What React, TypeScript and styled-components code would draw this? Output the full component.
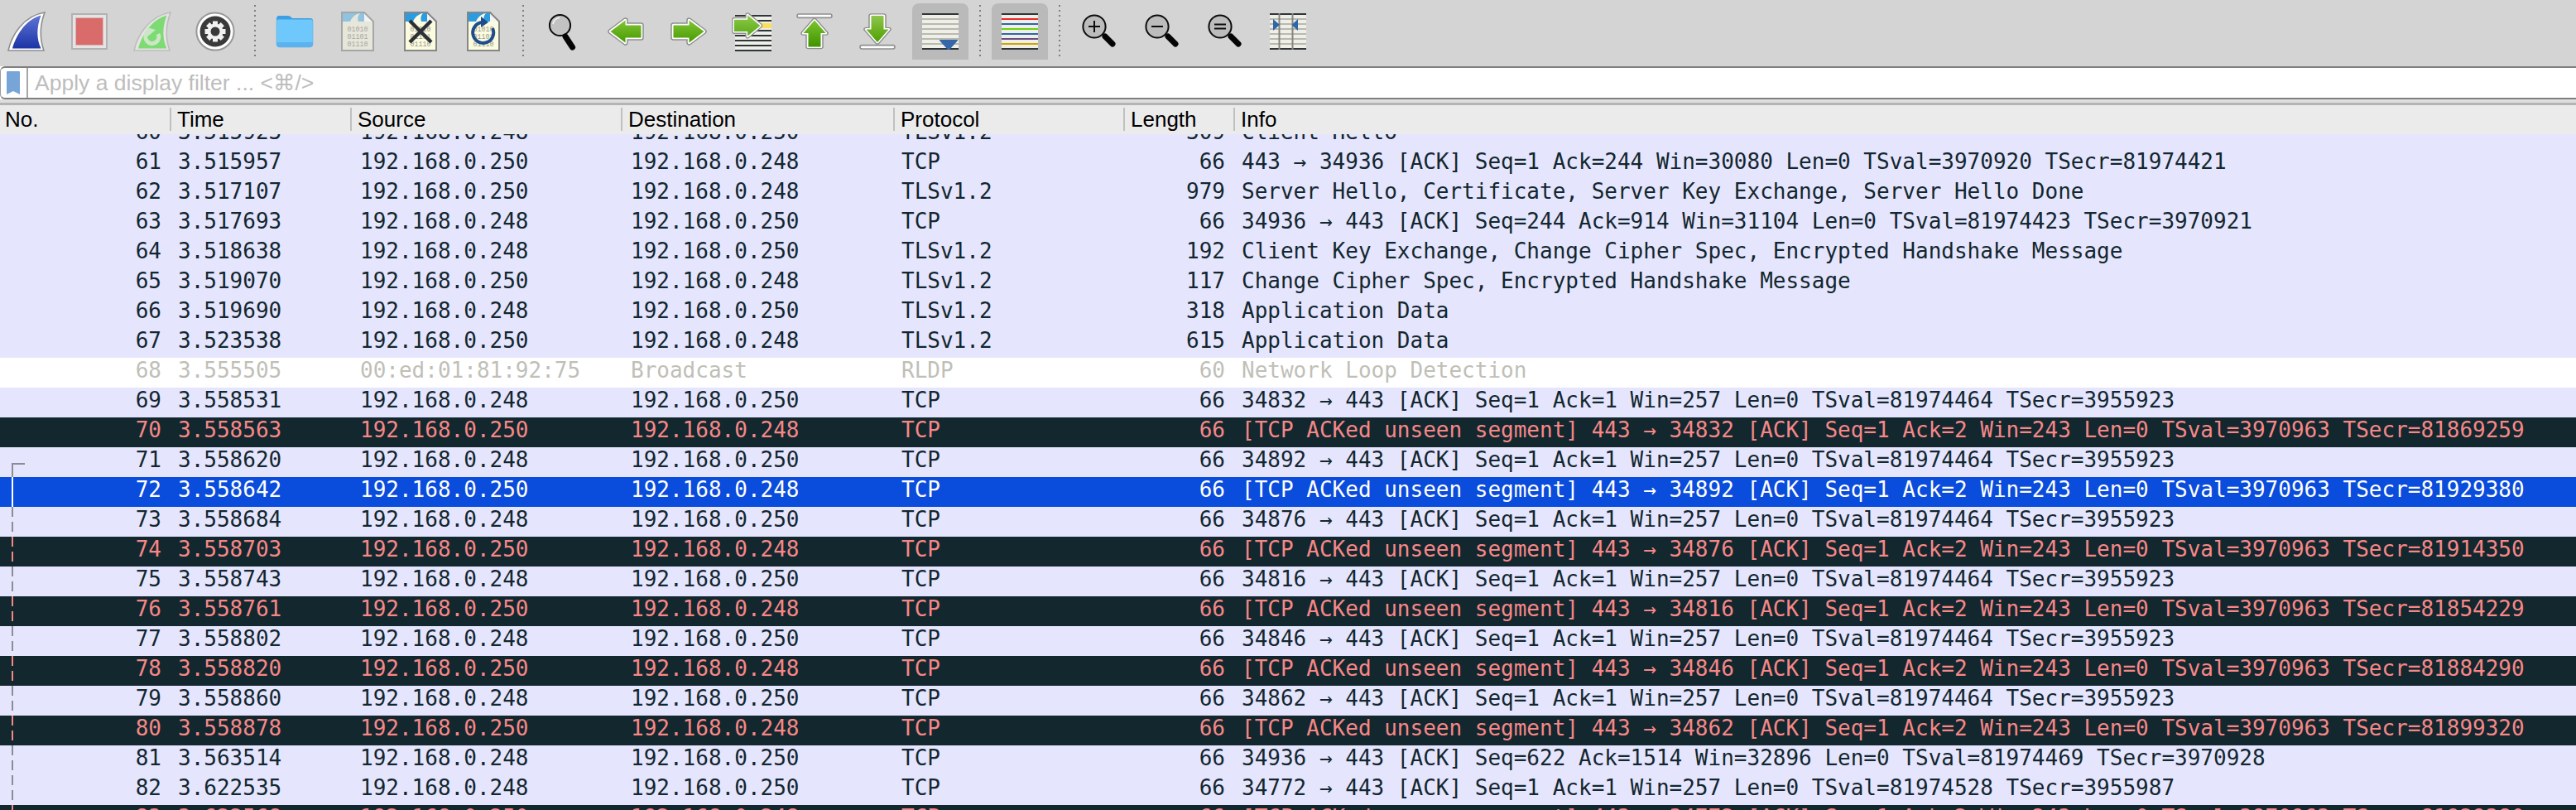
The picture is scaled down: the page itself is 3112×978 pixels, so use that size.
import type { ReactNode } from "react";
import styled, { createGlobalStyle } from "styled-components";

const GlobalStyle = createGlobalStyle`
  html, body {
    margin: 0;
    height: 100%;
    overflow: hidden;
    background: #ffffff;
  }
`;

const Page = styled.div`
  width: 3112px;
  height: 978px;
  display: flex;
  flex-direction: column;
  overflow: hidden;
`;

const Toolbar = styled.div`
  height: 80px;
  flex: none;
  display: flex;
  align-items: flex-start;
  padding: 4px 0 0 10px;
  box-sizing: border-box;
  background: #d4d4d4;
`;

const Tool = styled.div<{ $active?: boolean }>`
  flex: none;
  width: 68px;
  height: 68px;
  margin: 0 20px 0 -12px;
  display: flex;
  align-items: center;
  justify-content: center;
  border-radius: 8px 8px 0 0;
  background: ${(p) => (p.$active ? "#bababa" : "transparent")};

  svg {
    display: block;
    flex: none;
  }
`;

const ToolSeparator = styled.div`
  flex: none;
  width: 2px;
  height: 64px;
  margin: 2px 25px 0 -7px;
  background: repeating-linear-gradient(to bottom, #7d7d7d 0 2px, transparent 2px 6px);
`;

const FilterBar = styled.div`
  height: 40px;
  flex: none;
  box-sizing: border-box;
  display: flex;
  align-items: center;
  background: #ffffff;
  border-top: 2px solid #7f7f7f;
  border-bottom: 2px solid #7f7f7f;
  border-left: 1px solid #9a9a9a;
  border-bottom-left-radius: 6px;
  border-top-left-radius: 6px;
`;

const BookmarkSlot = styled.div`
  flex: none;
  width: 33px;
  height: 100%;
  display: flex;
  align-items: center;
  justify-content: center;
  padding-right: 2px;
  box-sizing: border-box;
  border-right: 2px solid #a5a5a5;
`;

const FilterHint = styled.div`
  margin-left: 8px;
  font: 26.5px "Liberation Sans", "DejaVu Sans", sans-serif;
  color: #bdbdbd;
  white-space: nowrap;
`;

const Splitter = styled.div`
  height: 7px;
  flex: none;
  box-sizing: border-box;
  background: #dedede;
  border-bottom: 3px solid #b4b4b4;
`;

const COLUMNS = "205px 218px 327px 329px 278px 133px 1fr";

const HeaderRow = styled.div`
  height: 35px;
  flex: none;
  display: grid;
  grid-template-columns: ${COLUMNS};
  background: #ebebeb;
  position: relative;
  z-index: 1;
`;

const HeaderCell = styled.div<{ $first?: boolean }>`
  height: 28px;
  margin-top: 3px;
  padding-left: ${(p) => (p.$first ? "6px" : "7px")};
  border-left: ${(p) => (p.$first ? "none" : "2px solid #c0c0c0")};
  font: 26px/28px "Liberation Sans", Arial, sans-serif;
  color: #000000;
`;

const PacketList = styled.div`
  flex: 1;
  overflow: hidden;
`;

const rowColors = {
  tcp: { bg: "#e6e5fe", fg: "#12272e", mark: "#8c8c94" },
  bad: { bg: "#12272e", fg: "#f78787", mark: "#f78787" },
  plain: { bg: "#ffffff", fg: "#bfbfb8", mark: "#8c8c94" },
  sel: { bg: "#0a4cdb", fg: "#ffffff", mark: "#ffffff" },
};

type RowKind = keyof typeof rowColors;

const Row = styled.div<{ $kind: RowKind }>`
  position: relative;
  height: 36px;
  display: grid;
  grid-template-columns: ${COLUMNS};
  background: ${(p) => rowColors[p.$kind].bg};
  color: ${(p) => rowColors[p.$kind].fg};
  font: 26px/31px "DejaVu Sans Mono", "Liberation Mono", monospace;
  white-space: pre;

  &:first-child {
    margin-top: -18px;
  }
`;

const Cell = styled.div<{ $right?: boolean; $shift?: boolean }>`
  padding: 0 10px 0 ${(p) => (p.$shift ? "12px" : "10px")};
  text-align: ${(p) => (p.$right ? "right" : "left")};
`;

const RelatedStart = styled.div<{ $kind: RowKind }>`
  position: absolute;
  left: 14px;
  top: 19px;
  bottom: 0;
  width: 16px;
  box-sizing: border-box;
  border-left: 2px solid ${(p) => rowColors[p.$kind].mark};
  border-top: 2px solid ${(p) => rowColors[p.$kind].mark};
`;

const RelatedLine = styled.div<{ $kind: RowKind; $dashed?: boolean }>`
  position: absolute;
  left: 14px;
  top: 0;
  bottom: 0;
  width: 2px;
  background: ${(p) =>
    p.$dashed
      ? `repeating-linear-gradient(to bottom, ${rowColors[p.$kind].mark} 0 12px, transparent 12px 18px)`
      : rowColors[p.$kind].mark};
`;

const BitsText = styled.text`
  font: 8.4px "Liberation Mono", "DejaVu Sans Mono", monospace;
  text-anchor: middle;
`;

const A = "192.168.0.248";
const B = "192.168.0.250";

type Packet = [number, string, string, string, string, number, string, RowKind?];

const ack = (port: number) =>
  `${port} → 443 [ACK] Seq=1 Ack=1 Win=257 Len=0 TSval=81974464 TSecr=3955923`;
const unseen = (port: number, secr: number) =>
  `[TCP ACKed unseen segment] 443 → ${port} [ACK] Seq=1 Ack=2 Win=243 Len=0 TSval=3970963 TSecr=${secr}`;

const packets: Packet[] = [
  [60, "3.515923", A, B, "TLSv1.2", 309, "Client Hello"],
  [61, "3.515957", B, A, "TCP", 66, "443 → 34936 [ACK] Seq=1 Ack=244 Win=30080 Len=0 TSval=3970920 TSecr=81974421"],
  [62, "3.517107", B, A, "TLSv1.2", 979, "Server Hello, Certificate, Server Key Exchange, Server Hello Done"],
  [63, "3.517693", A, B, "TCP", 66, "34936 → 443 [ACK] Seq=244 Ack=914 Win=31104 Len=0 TSval=81974423 TSecr=3970921"],
  [64, "3.518638", A, B, "TLSv1.2", 192, "Client Key Exchange, Change Cipher Spec, Encrypted Handshake Message"],
  [65, "3.519070", B, A, "TLSv1.2", 117, "Change Cipher Spec, Encrypted Handshake Message"],
  [66, "3.519690", A, B, "TLSv1.2", 318, "Application Data"],
  [67, "3.523538", B, A, "TLSv1.2", 615, "Application Data"],
  [68, "3.555505", "00:ed:01:81:92:75", "Broadcast", "RLDP", 60, "Network Loop Detection", "plain"],
  [69, "3.558531", A, B, "TCP", 66, ack(34832)],
  [70, "3.558563", B, A, "TCP", 66, unseen(34832, 81869259), "bad"],
  [71, "3.558620", A, B, "TCP", 66, ack(34892)],
  [72, "3.558642", B, A, "TCP", 66, unseen(34892, 81929380), "sel"],
  [73, "3.558684", A, B, "TCP", 66, ack(34876)],
  [74, "3.558703", B, A, "TCP", 66, unseen(34876, 81914350), "bad"],
  [75, "3.558743", A, B, "TCP", 66, ack(34816)],
  [76, "3.558761", B, A, "TCP", 66, unseen(34816, 81854229), "bad"],
  [77, "3.558802", A, B, "TCP", 66, ack(34846)],
  [78, "3.558820", B, A, "TCP", 66, unseen(34846, 81884290), "bad"],
  [79, "3.558860", A, B, "TCP", 66, ack(34862)],
  [80, "3.558878", B, A, "TCP", 66, unseen(34862, 81899320), "bad"],
  [81, "3.563514", A, B, "TCP", 66, "34936 → 443 [ACK] Seq=622 Ack=1514 Win=32896 Len=0 TSval=81974469 TSecr=3970928"],
  [82, "3.622535", A, B, "TCP", 66, "34772 → 443 [ACK] Seq=1 Ack=1 Win=257 Len=0 TSval=81974528 TSecr=3955987"],
  [83, "3.622568", B, A, "TCP", 66, unseen(34772, 81929380), "bad"],
];

function Gradient({ id, from, to, along }: { id: string; from: string; to: string; along?: boolean }) {
  return (
    <defs>
      <linearGradient id={id} x1="0" y1="0" x2={along ? "1" : "0"} y2={along ? "0" : "1"}>
        <stop offset="0" stopColor={from} />
        <stop offset="1" stopColor={to} />
      </linearGradient>
    </defs>
  );
}

const FIN_OUTER = "M2 48 C6 30 20 6 46 2 C40 18 40 34 45 48 Z";
const FIN_INNER = "M7 45.5 C11 31 22 11 41.5 5.5 C36 20 36 34 41.5 45.5 Z";

function StartIcon() {
  return (
    <svg width="48" height="50" viewBox="0 0 48 50">
      <Gradient id="startFin" from="#5f75d6" to="#1c33a6" />
      <path d={FIN_OUTER} fill="#ffffff" stroke="#8e8e8e" strokeWidth="1.6" />
      <path d={FIN_INNER} fill="url(#startFin)" />
    </svg>
  );
}

function StopIcon() {
  return (
    <svg width="44" height="44" viewBox="0 0 44 44">
      <rect x="1" y="1" width="42" height="42" fill="#e4e4e4" stroke="#b2b2b2" strokeWidth="2" />
      <rect x="5.5" y="5.5" width="33" height="33" fill="#d96b6b" stroke="#dfb4b4" />
    </svg>
  );
}

function RestartIcon() {
  return (
    <svg width="48" height="50" viewBox="0 0 48 50">
      <path d={FIN_OUTER} fill="#e4e4e4" stroke="#bdbdbd" strokeWidth="1.6" />
      <path d={FIN_INNER} fill="#7edb73" />
      <path d="M18 26 A8 8 0 1 0 31 28" fill="none" stroke="#cbe7c7" strokeWidth="5" />
      <path d="M16 19.5 L28 23 L18.5 31 Z" fill="#cbe7c7" />
    </svg>
  );
}

function OptionsIcon() {
  const teeth = [0, 45, 90, 135, 180, 225, 270, 315];
  return (
    <svg width="48" height="48" viewBox="0 0 48 48">
      <circle cx="24" cy="24" r="22.6" fill="#ffffff" stroke="#989898" strokeWidth="2" />
      <circle cx="24" cy="24" r="18.5" fill="#3a3a3a" />
      {teeth.map((deg) => (
        <rect key={deg} x="21" y="11.5" width="6" height="6" fill="#f2f2f2" transform={`rotate(${deg} 24 24)`} />
      ))}
      <circle cx="24" cy="24" r="7.5" fill="none" stroke="#f2f2f2" strokeWidth="4" />
    </svg>
  );
}

function FolderIcon() {
  return (
    <svg width="46" height="40" viewBox="0 0 46 40">
      <path d="M1 5 Q1 1 4 1 H15 Q18 1 20 4 H42 Q45 4 45 7 V20 H1 Z" fill="#3c9fe6" />
      <path d="M1 8 Q1 5.5 4 5.5 H42 Q45 5.5 45 8 V35 Q45 39 41 39 H5 Q1 39 1 35 Z" fill="#6ec8fb" stroke="#5db3e6" strokeWidth="0.6" />
      <path d="M1 33 H45 V35 Q45 39 41 39 H5 Q1 39 1 35 Z" fill="#5ab2ee" />
    </svg>
  );
}

function FileIcon({ band, body, bits, stroke }: { band: string; body: string; bits: string; stroke: string }) {
  return (
    <>
      <path d="M1 1 H28 L39 12 V47 H1 Z" fill={body} />
      <path d="M1 1 H28 V12 H1 Z" fill={band} />
      <path d="M11 12 C13 7 17 3 23 2 C20 5 20 9 21 12 Z" fill={body} />
      <path d="M28 1 V12 H39 Z" fill="#f4f4f4" />
      <path d="M1 1 H28 L39 12 V47 H1 Z" fill="none" stroke={stroke} strokeWidth="2" />
      <BitsText x="20" y="24" fill={bits}>01010</BitsText>
      <BitsText x="20" y="33" fill={bits}>01101</BitsText>
      <BitsText x="20" y="42" fill={bits}>01110</BitsText>
    </>
  );
}

function OpenFileIcon() {
  return (
    <svg width="40" height="48" viewBox="0 0 40 48">
      <FileIcon band="#8fc3e0" body="#e6e6da" bits="#a9a9a0" stroke="#a6a6a6" />
    </svg>
  );
}

function CloseFileIcon() {
  return (
    <svg width="40" height="48" viewBox="0 0 40 48">
      <FileIcon band="#2b9be2" body="#fbfbdf" bits="#9b9b90" stroke="#868686" />
      <path d="M7 11 L33 37 M33 11 L7 37" stroke="#2c3034" strokeWidth="4.4" />
    </svg>
  );
}

function ReloadFileIcon() {
  return (
    <svg width="40" height="48" viewBox="0 0 40 48">
      <FileIcon band="#2b9be2" body="#fbfbdf" bits="#9b9b90" stroke="#868686" />
      <path d="M18 13 A12.5 12.5 0 1 0 31 20" fill="none" stroke="#1f4d8c" strokeWidth="4" />
      <path d="M17 6 L26 13 L17 19 Z" fill="#1f4d8c" />
    </svg>
  );
}

function FindIcon() {
  return (
    <svg width="38" height="46" viewBox="0 0 38 46">
      <circle cx="15.5" cy="15.5" r="12.6" fill="#c2c2c2" stroke="#0c0c0c" strokeWidth="2" />
      <path d="M7 14 A9 9 0 0 1 15 6.5" fill="none" stroke="#f4f4f4" strokeWidth="1.6" />
      <path d="M22 29 L30.5 42" stroke="#050505" strokeWidth="7" strokeLinecap="round" />
    </svg>
  );
}

// green arrow pointing right, the other directions rotate or mirror it
function Arrow(props: { id: string; transform?: string; from?: string; to?: string; along?: boolean }) {
  const { id, transform, from = "#82c536", to = "#469a00", along } = props;
  const d = "M3.5 10.5 H22.5 V4.5 L40.5 18 L22.5 31.5 V25.5 H3.5 Z";
  return (
    <g transform={transform}>
      <Gradient id={id} from={from} to={to} along={along} />
      <path d={d} fill="none" stroke="#8f8f8f" strokeWidth="6.5" strokeLinejoin="round" />
      <path d={d} fill="none" stroke="#ffffff" strokeWidth="3.5" strokeLinejoin="round" />
      <path d={d} fill={`url(#${id})`} />
    </g>
  );
}

function BackIcon() {
  return (
    <svg width="44" height="36" viewBox="0 0 44 36">
      <Arrow id="backFill" transform="translate(44 0) scale(-1 1)" />
    </svg>
  );
}

function ForwardIcon() {
  return (
    <svg width="44" height="36" viewBox="0 0 44 36">
      <Arrow id="fwdFill" />
    </svg>
  );
}

function ListStripes({ lines }: { lines: [number, string][] }) {
  return (
    <>
      <rect width="44" height="44" fill="#efefe9" />
      {lines.map(([y, color]) => (
        <rect key={y} y={y} width="44" height="2" fill={color} />
      ))}
    </>
  );
}

const DARK = "#2f3538";
const PALE = "#b9b9ae";

function GotoIcon() {
  return (
    <svg width="48" height="48" viewBox="0 0 48 48">
      <g transform="translate(4 4)">
        <ListStripes
          lines={[
            [0, DARK],
            [6, DARK],
            [18, DARK],
            [24, DARK],
            [30, DARK],
            [36, DARK],
            [42, DARK],
          ]}
        />
        <rect x="30" y="10" width="14" height="6" fill="#fbe15b" />
      </g>
      <g transform="scale(0.85 0.94)">
        <Arrow id="gotoFill" from="#8ecb45" to="#5aa81a" />
      </g>
    </svg>
  );
}

function TopIcon() {
  return (
    <svg width="44" height="44" viewBox="0 0 44 44">
      <rect x="1" y="1" width="42" height="4.4" rx="2.2" fill="#ffffff" stroke="#8f8f8f" strokeWidth="1.6" />
      <g transform="translate(22 24.5) rotate(-90) scale(0.86 1) translate(-22 -18)">
        <Arrow id="topFill" from="#3f9400" to="#7cc42e" along />
      </g>
    </svg>
  );
}

function BottomIcon() {
  return (
    <svg width="44" height="44" viewBox="0 0 44 44">
      <rect x="1" y="38.6" width="42" height="4.4" rx="2.2" fill="#ffffff" stroke="#8f8f8f" strokeWidth="1.6" />
      <g transform="translate(22 19) rotate(90) scale(0.86 1) translate(-22 -18)">
        <Arrow id="bottomFill" from="#8ec64c" to="#4ea000" along />
      </g>
    </svg>
  );
}

const paleLines: [number, string][] = [
  [0, DARK],
  [6, PALE],
  [12, PALE],
  [18, PALE],
  [24, PALE],
  [30, PALE],
  [36, PALE],
  [42, DARK],
];

function AutoscrollIcon() {
  return (
    <svg width="44" height="44" viewBox="0 0 44 44">
      <ListStripes lines={paleLines} />
      <path d="M21 33 Q20 32 22 32 H42 Q44 32 43 33 L33 44 H31 Z" fill="#3566a9" />
    </svg>
  );
}

function ColorizeIcon() {
  return (
    <svg width="44" height="44" viewBox="0 0 44 44">
      <ListStripes
        lines={[
          [0, DARK],
          [6, "#e9272b"],
          [12, "#2f66a8"],
          [18, "#6ed00e"],
          [24, "#2f66a8"],
          [30, "#6c4b81"],
          [36, "#cfa502"],
          [42, DARK],
        ]}
      />
    </svg>
  );
}

function ZoomGlass({ children }: { children?: ReactNode }) {
  return (
    <svg width="42" height="42" viewBox="0 0 42 42">
      <circle cx="15" cy="15" r="13.6" fill="#bcbcbc" stroke="#0c0c0c" strokeWidth="2" />
      {children}
      <path d="M28 27 L37 36" stroke="#050505" strokeWidth="7" strokeLinecap="round" />
    </svg>
  );
}

function ResizeIcon() {
  return (
    <svg width="44" height="44" viewBox="0 0 44 44">
      <ListStripes lines={paleLines} />
      <rect x="10.5" width="2" height="44" fill="#85857f" />
      <rect x="26.5" width="2" height="44" fill="#85857f" />
      <path d="M4 7 L12 14 L4 21 Z" fill="#2f66a8" />
      <path d="M34 7 L26.5 14 L34 21 Z" fill="#2f66a8" />
    </svg>
  );
}

function BookmarkIcon() {
  return (
    <svg width="16" height="28" viewBox="0 0 16 28">
      <path d="M1 0 H15 Q16 0 16 1 V28 L8 24 L0 28 V1 Q0 0 1 0 Z" fill="#78a5d8" />
    </svg>
  );
}

export default function App() {
  return (
    <Page>
      <GlobalStyle />
      <Toolbar>
        <Tool><StartIcon /></Tool>
        <Tool><StopIcon /></Tool>
        <Tool><RestartIcon /></Tool>
        <Tool><OptionsIcon /></Tool>
        <ToolSeparator />
        <Tool><FolderIcon /></Tool>
        <Tool><OpenFileIcon /></Tool>
        <Tool><CloseFileIcon /></Tool>
        <Tool><ReloadFileIcon /></Tool>
        <ToolSeparator />
        <Tool><FindIcon /></Tool>
        <Tool><BackIcon /></Tool>
        <Tool><ForwardIcon /></Tool>
        <Tool><GotoIcon /></Tool>
        <Tool><TopIcon /></Tool>
        <Tool><BottomIcon /></Tool>
        <Tool $active><AutoscrollIcon /></Tool>
        <ToolSeparator />
        <Tool $active><ColorizeIcon /></Tool>
        <ToolSeparator />
        <Tool>
          <ZoomGlass>
            <path d="M15 8 V22 M8 15 H22" stroke="#0c0c0c" strokeWidth="2" />
          </ZoomGlass>
        </Tool>
        <Tool>
          <ZoomGlass>
            <path d="M8 15 H22" stroke="#0c0c0c" strokeWidth="2" />
          </ZoomGlass>
        </Tool>
        <Tool>
          <ZoomGlass>
            <path d="M8 12.5 H22 M8 17.5 H22" stroke="#0c0c0c" strokeWidth="2" />
          </ZoomGlass>
        </Tool>
        <Tool><ResizeIcon /></Tool>
      </Toolbar>

      <FilterBar>
        <BookmarkSlot><BookmarkIcon /></BookmarkSlot>
        <FilterHint>Apply a display filter ... &lt;⌘/&gt;</FilterHint>
      </FilterBar>
      <Splitter />

      <HeaderRow>
        <HeaderCell $first>No.</HeaderCell>
        <HeaderCell>Time</HeaderCell>
        <HeaderCell>Source</HeaderCell>
        <HeaderCell>Destination</HeaderCell>
        <HeaderCell>Protocol</HeaderCell>
        <HeaderCell>Length</HeaderCell>
        <HeaderCell>Info</HeaderCell>
      </HeaderRow>

      <PacketList>
        {packets.map(([no, time, src, dst, proto, len, info, kind = "tcp"]) => (
          <Row key={no} $kind={kind}>
            {no === 71 && <RelatedStart $kind={kind} />}
            {no === 72 && <RelatedLine $kind={kind} />}
            {no > 72 && <RelatedLine $kind={kind} $dashed />}
            <Cell $right>{no}</Cell>
            <Cell>{time}</Cell>
            <Cell $shift>{src}</Cell>
            <Cell $shift>{dst}</Cell>
            <Cell>{proto}</Cell>
            <Cell $right>{len}</Cell>
            <Cell>{info}</Cell>
          </Row>
        ))}
      </PacketList>
    </Page>
  );
}
